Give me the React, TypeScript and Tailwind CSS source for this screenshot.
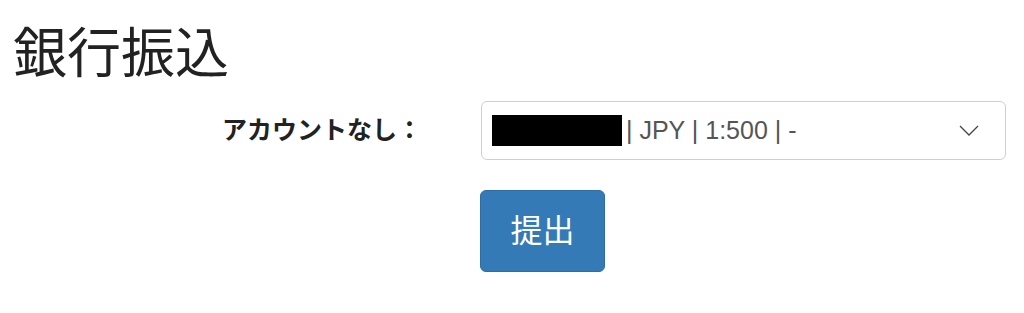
const JP = "font-['Liberation_Sans','Noto_Sans_CJK_JP',sans-serif]"

export default function App() {
  return (
    <div className={`${JP} bg-white min-h-[313px] w-[1024px] text-[#333]`}>
      <h1 className="pl-[13px] pt-[25px] text-[54px] leading-[1.1] font-normal text-[#222]">銀行振込</h1>

      <form className="mt-[17px]" onSubmit={e => e.preventDefault()}>
        <div className="flex items-center">
          <label className="w-[422px] text-right text-[25px] font-bold text-[#222] leading-none">
            アカウントなし：
          </label>
          <div className="ml-[59px] w-[525px] h-[59px] border-[1.5px] border-[#cfcfcf] rounded-[6px] flex items-center pl-[10px] pr-[26px]">
            <span className="w-[130px] h-[31px] bg-black shrink-0" />
            <span className="ml-[4px] text-[25px] text-[#555] leading-none">| JPY | 1:500 | -</span>
            <svg className="ml-auto" width="20" height="11" viewBox="0 0 20 11" fill="none">
              <path d="M1 1 L10 10 L19 1" stroke="#444" strokeWidth="1.3" />
            </svg>
          </div>
        </div>

        <div className="flex mt-[30px] pl-[480px]">
          <button
            type="submit"
            className="w-[125px] h-[82px] bg-[#337ab7] border border-[#2e6da4] rounded-[6px] text-white text-[32px] leading-none"
          >
            提出
          </button>
        </div>
      </form>
    </div>
  )
}
